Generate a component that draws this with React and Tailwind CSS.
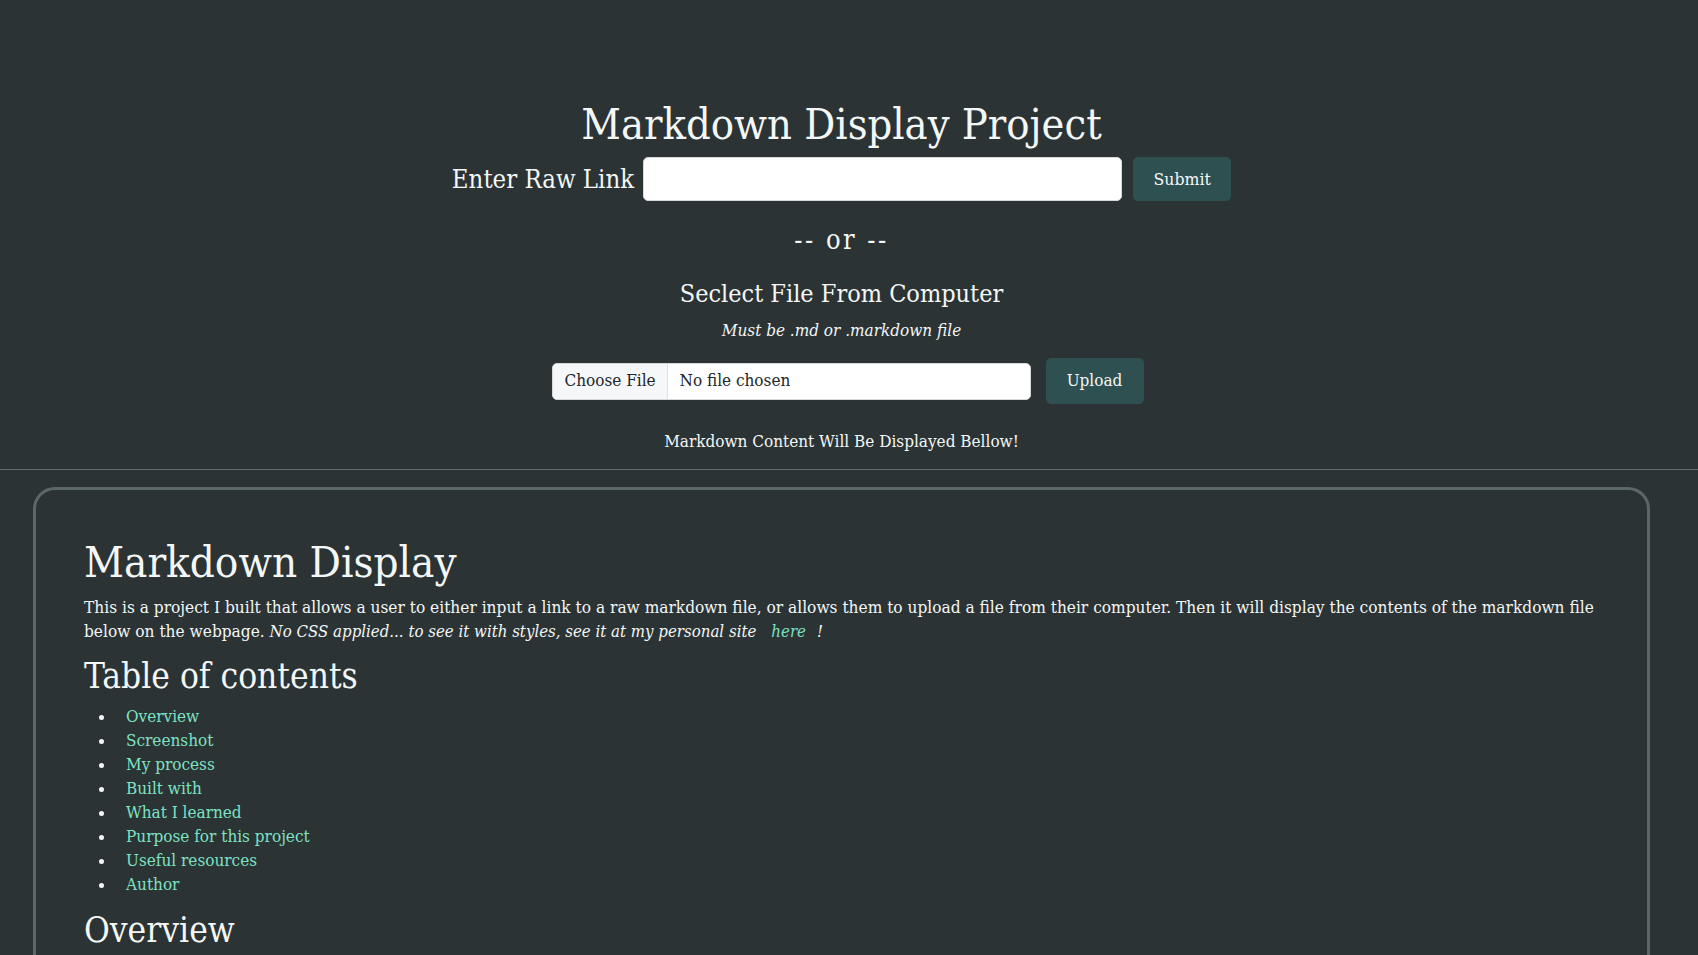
// App.jsx
// Markdown Display Project page

const TOC = [
  'Overview',
  'Screenshot',
  'My process',
  'Built with',
  'What I learned',
  'Purpose for this project',
  'Useful resources',
  'Author',
];

function TocItem({ label }) {
  return (
    <li className="flex items-center h-[24px]">
      <span className="ml-[15px] w-[5px] h-[5px] rounded-full bg-[#f4f7f7] translate-y-[1px]" />
      <a href="#" className="ml-[22px] text-[#7ee2c4]">{label}</a>
    </li>
  );
}

export default function App() {
  return (
    <div className="w-full h-[955px] overflow-hidden bg-[#2b3334] text-[#f4f7f7] font-['DejaVu_Serif',serif] font-stretch-condensed">
      <header className="border-b border-[#646d6d] pb-[15px]">
        <div className="w-[1683px] flex flex-col items-center pt-[96px]">
          <h1 className="text-[43px] leading-[56px] font-normal">Markdown Display Project</h1>

          <div className="flex items-center mt-[5px] h-[44px]">
            <label className="text-[25.5px] leading-[36px]">Enter Raw Link</label>
            <input
              type="text"
              className="ml-[9px] w-[479px] h-[44px] bg-white rounded-[5px] border border-[#d6d9dc] outline-none px-3 text-[#212529]"
            />
            <button className="ml-[11px] w-[98px] h-[44px] rounded-[5px] bg-[#2e5050] text-[17.5px] text-[#f4f7f7]">
              Submit
            </button>
          </div>

          <p className="mt-[21px] text-[27px] leading-[36px] tracking-[2.5px]">-- or --</p>

          <h2 className="mt-[18px] text-[25px] leading-[36px] font-normal">Seclect File From Computer</h2>
          <p className="mt-[6px] text-[17px] leading-[24px] italic">Must be .md or .markdown file</p>

          <div className="flex items-center mt-[16px] h-[46px] pl-[12px]">
            <div className="flex items-center w-[479px] h-[37px] bg-white rounded-[5px] border border-[#d6d9dc] overflow-hidden text-[17px] text-[#212529]">
              <span className="h-full flex items-center px-[12px] w-[115px] bg-[#f6f7f8] border-r border-[#dee2e6] whitespace-nowrap">
                Choose File
              </span>
              <span className="ml-[12px]">No file chosen</span>
            </div>
            <button className="ml-[15px] w-[98px] h-[46px] rounded-[5px] bg-[#2e5050] text-[17px] text-[#f4f7f7]">
              Upload
            </button>
          </div>

          <p className="mt-[24px] text-[17px] leading-[26px]">Markdown Content Will Be Displayed Bellow!</p>
        </div>
      </header>

      <div className="w-[1683px]">
        <main className="mt-[17px] mx-[33px] border-[3px] border-[#5c6767] rounded-[22px] px-[48px] pt-[44px] pb-[40px] min-h-[600px]">
          <h1 className="text-[43.5px] leading-[56px] font-normal">Markdown Display</h1>
          <p className="mt-[5px] text-[17.15px] leading-[24px]">
            <span className="block whitespace-nowrap">
              This is a project I built that allows a user to either input a link to a raw markdown file, or allows them to upload a file from their computer. Then it will display the contents of the markdown file
            </span>
            <span className="block whitespace-nowrap">
              below on the webpage.{' '}
              <em className="text-[16.7px]">
                No CSS applied... to see it with styles, see it at my personal site
                <a href="#" className="ml-[15px] mr-[11px] text-[#7ee2c4]">here</a>!
              </em>
            </span>
          </p>

          <h2 className="mt-[11px] text-[35px] leading-[44px] font-normal">Table of contents</h2>
          <ul className="mt-[6px] text-[17px] leading-[24px]">
            {TOC.map((t) => (
              <TocItem key={t} label={t} />
            ))}
          </ul>

          <h2 className="mt-[12px] text-[35px] leading-[44px] font-normal">Overview</h2>
        </main>
      </div>
    </div>
  );
}
